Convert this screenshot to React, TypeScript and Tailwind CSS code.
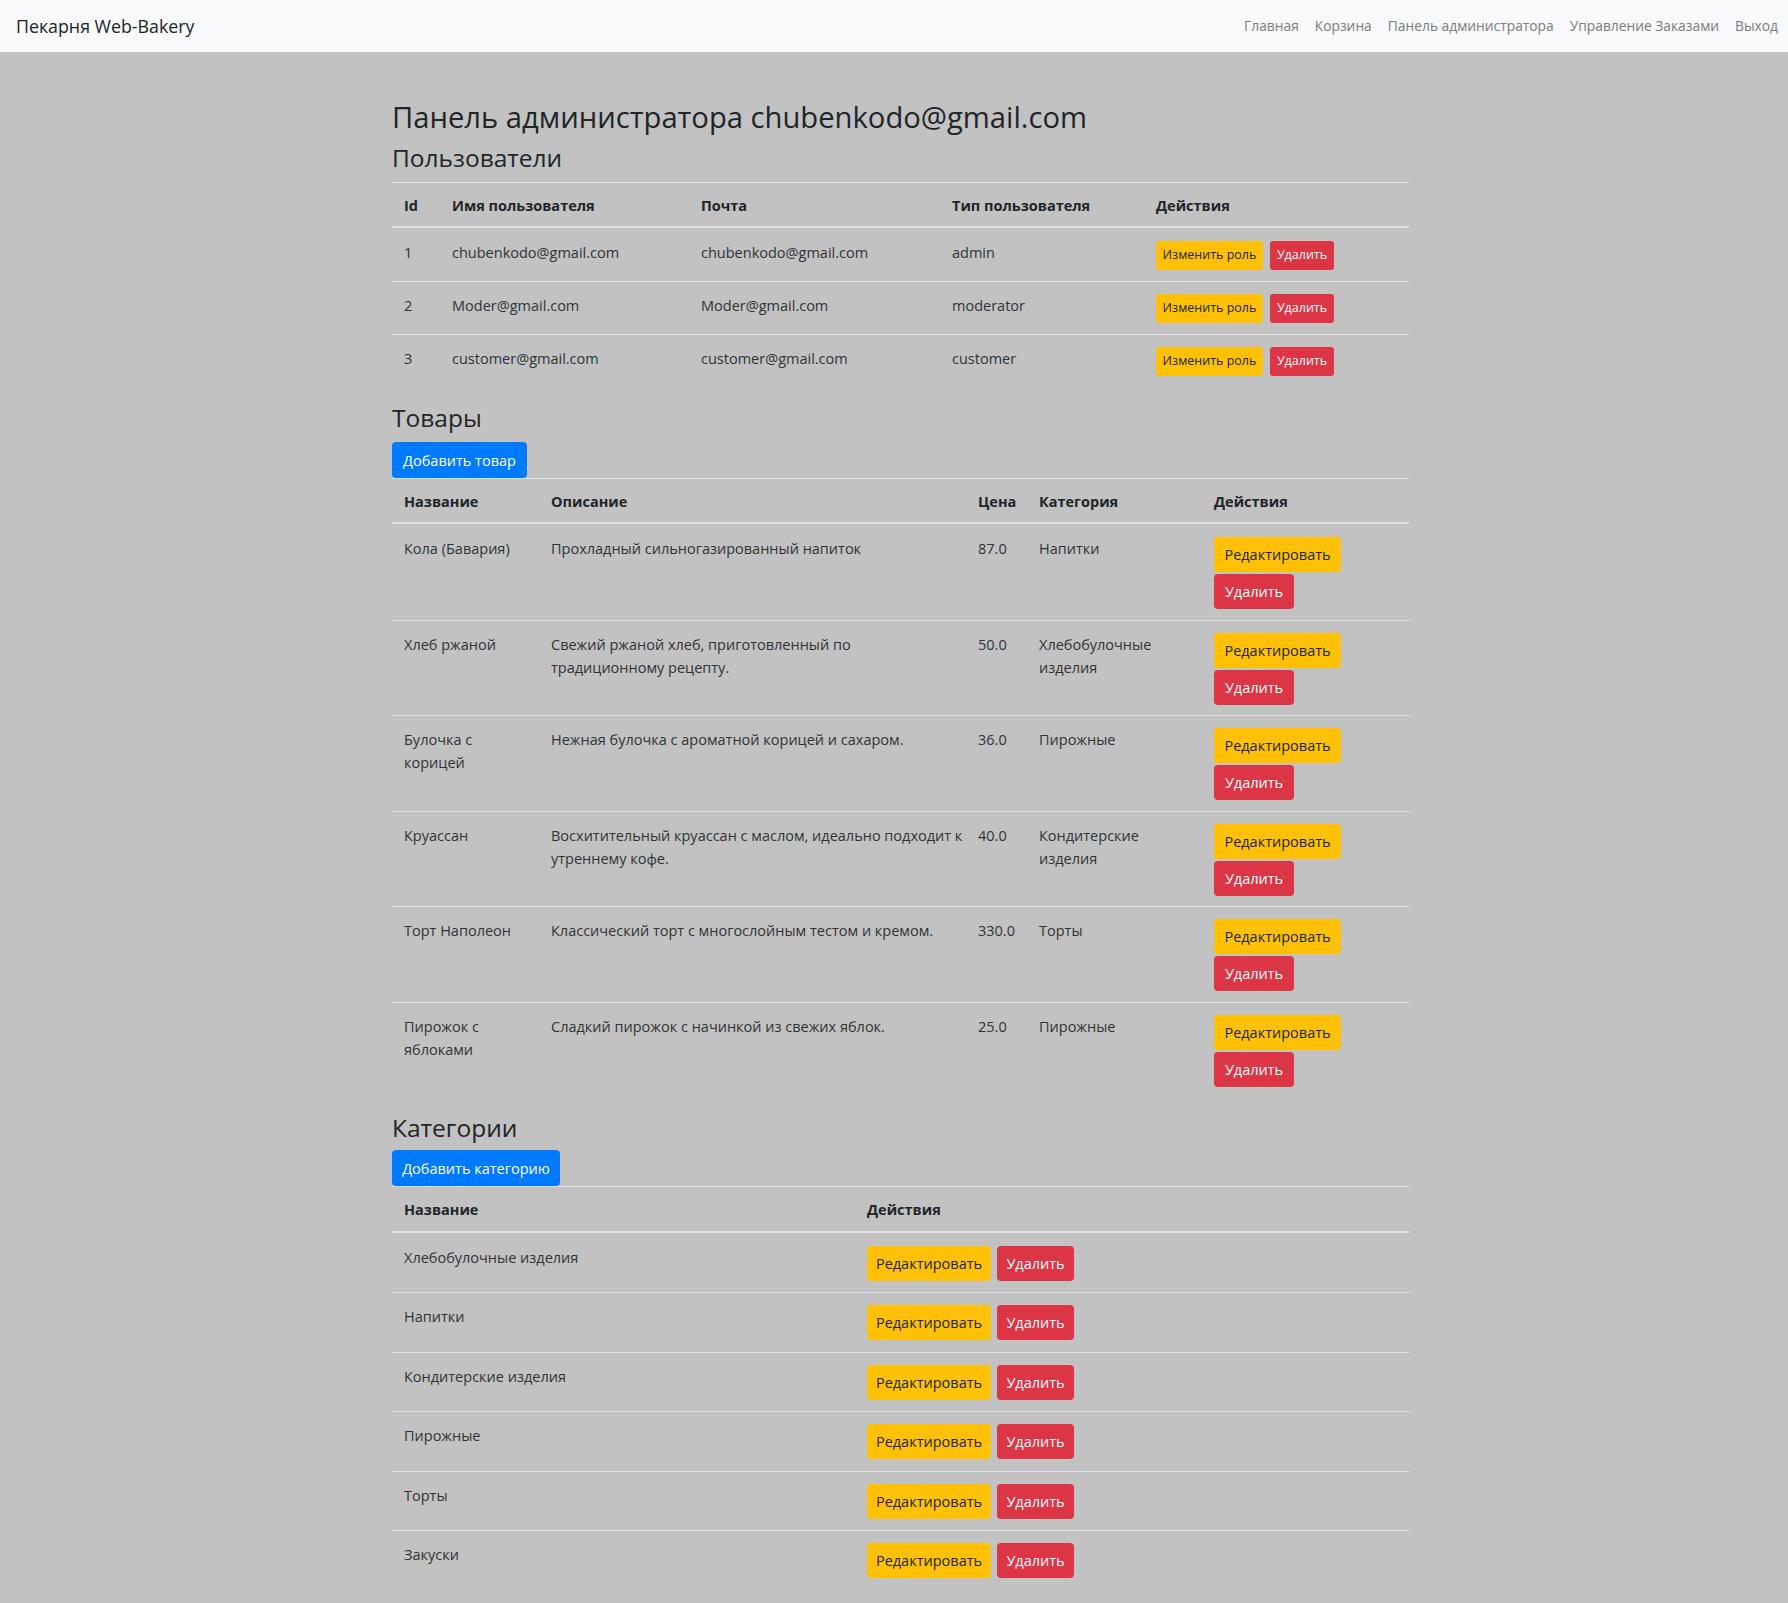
import React from 'react'

const users = [
  { id: 1, name: 'chubenkodo@gmail.com', email: 'chubenkodo@gmail.com', role: 'admin' },
  { id: 2, name: 'Moder@gmail.com', email: 'Moder@gmail.com', role: 'moderator' },
  { id: 3, name: 'customer@gmail.com', email: 'customer@gmail.com', role: 'customer' },
]

const products = [
  { name: ['Кола (Бавария)'], desc: ['Прохладный сильногазированный напиток'], price: '87.0', cat: ['Напитки'] },
  { name: ['Хлеб ржаной'], desc: ['Свежий ржаной хлеб, приготовленный по', 'традиционному рецепту.'], price: '50.0', cat: ['Хлебобулочные', 'изделия'] },
  { name: ['Булочка с', 'корицей'], desc: ['Нежная булочка с ароматной корицей и сахаром.'], price: '36.0', cat: ['Пирожные'] },
  { name: ['Круассан'], desc: ['Восхитительный круассан с маслом, идеально подходит к', 'утреннему кофе.'], price: '40.0', cat: ['Кондитерские', 'изделия'] },
  { name: ['Торт Наполеон'], desc: ['Классический торт с многослойным тестом и кремом.'], price: '330.0', cat: ['Торты'] },
  { name: ['Пирожок с', 'яблоками'], desc: ['Сладкий пирожок с начинкой из свежих яблок.'], price: '25.0', cat: ['Пирожные'] },
]

const categories = ['Хлебобулочные изделия', 'Напитки', 'Кондитерские изделия', 'Пирожные', 'Торты', 'Закуски']

const navLinks = ['Главная', 'Корзина', 'Панель администратора', 'Управление Заказами', 'Выход']

function Lines({ lines }: { lines: string[] }) {
  return (
    <>
      {lines.map((l, i) => (
        <div key={i} className="whitespace-nowrap">
          {l}
        </div>
      ))}
    </>
  )
}

export default function App() {
  return (
    <div
      className="min-h-[1603px] bg-[#c2c2c2] text-[#212529]"
      style={{ fontFamily: '"Open Sans", "Noto Sans", sans-serif' }}
    >
      <nav className="flex h-[52px] items-center justify-between bg-[#f8f9fa] pl-4 pr-[2px]">
        <span className="text-[17.8px] text-[#212529]">Пекарня Web-Bakery</span>
        <div className="flex items-center">
          {navLinks.map((l) => (
            <a key={l} className="px-2 text-[13.8px] text-[#7b7c7d]">
              {l}
            </a>
          ))}
        </div>
      </nav>

      <main className="ml-[392px] w-[1017px] pt-[48px] text-[14.5px] leading-[23px]">
        <h1 className="mb-2 text-[29.2px] font-medium leading-[35px]">Панель администратора chubenkodo@gmail.com</h1>
        <h2 className="mb-[9px] text-[24.5px] font-medium leading-[30px]">Пользователи</h2>

        <div className="mb-[16px]">
          <div className="grid h-[46px] grid-cols-[48px_249px_251px_204px_265px] border-t border-b-2 border-[#dee2e6] pt-[11px] font-bold">
            <div className="px-3">Id</div>
            <div className="px-3">Имя пользователя</div>
            <div className="px-3">Почта</div>
            <div className="px-3">Тип пользователя</div>
            <div className="px-3">Действия</div>
          </div>
          <div className="text-[#303336]">
            {users.map((u) => (
              <div
                key={u.id}
                className="grid h-[53px] grid-cols-[48px_249px_251px_204px_265px] border-t border-[#dee2e6] pt-[12px] first:border-t-0 first:pt-[13px]"
              >
                <div className="px-3">{u.id}</div>
                <div className="px-3">{u.name}</div>
                <div className="px-3">{u.email}</div>
                <div className="px-3">{u.role}</div>
                <div className="flex gap-[7px] px-3">
                  <button className="h-[29px] w-[107px] rounded-[3px] bg-[#ffc107] text-[12.5px] leading-none text-[#212529]">
                    Изменить роль
                  </button>
                  <button className="h-[29px] w-[64px] rounded-[3px] bg-[#dc3545] text-[12.5px] leading-none text-white">
                    Удалить
                  </button>
                </div>
              </div>
            ))}
          </div>
        </div>

        <h2 className="mb-[9px] text-[24.5px] font-medium leading-[30px]">Товары</h2>
        <button className="h-[36px] w-[135px] rounded-[4px] bg-[#007bff] text-[14.5px] text-white">Добавить товар</button>

        <div className="mb-4">
          <div className="grid h-[46px] grid-cols-[147px_427px_61px_175px_207px] border-t border-b-2 border-[#dee2e6] pt-[11px] font-bold">
            <div className="px-3">Название</div>
            <div className="px-3">Описание</div>
            <div className="px-3">Цена</div>
            <div className="px-3">Категория</div>
            <div className="px-3">Действия</div>
          </div>
          <div className="text-[#303336]">
            {products.map((p, i) => (
              <div
                key={i}
                className="grid h-[95.5px] grid-cols-[147px_427px_61px_175px_207px] border-t border-[#dee2e6] pt-[12px] first:border-t-0 first:pt-[13px]"
              >
                <div className="px-3">
                  <Lines lines={p.name} />
                </div>
                <div className="px-3">
                  <Lines lines={p.desc} />
                </div>
                <div className="px-3">{p.price}</div>
                <div className="px-3">
                  <Lines lines={p.cat} />
                </div>
                <div className="flex flex-col items-start gap-[2px] px-3">
                  <button className="h-[35px] w-[127px] rounded-[4px] bg-[#ffc107] text-[14.5px] text-[#212529]">
                    Редактировать
                  </button>
                  <button className="h-[35px] w-[80px] rounded-[4px] bg-[#dc3545] text-[14.5px] text-white">
                    Удалить
                  </button>
                </div>
              </div>
            ))}
          </div>
        </div>

        <h2 className="mb-[7px] text-[24.5px] font-medium leading-[30px]">Категории</h2>
        <button className="h-[36px] w-[168px] rounded-[4px] bg-[#007bff] text-[14.5px] text-white">
          Добавить категорию
        </button>

        <div>
          <div className="grid h-[47px] grid-cols-[463px_554px] border-t border-b-2 border-[#dee2e6] pt-[11px] font-bold">
            <div className="px-3">Название</div>
            <div className="px-3">Действия</div>
          </div>
          <div className="text-[#303336]">
            {categories.map((c) => (
              <div
                key={c}
                className="grid h-[59.4px] grid-cols-[463px_554px] border-t border-[#dee2e6] pt-[12px] first:border-t-0 first:pt-[13px]"
              >
                <div className="px-3">{c}</div>
                <div className="flex gap-[6px] px-3">
                  <button className="h-[35px] w-[124px] rounded-[4px] bg-[#ffc107] text-[14.5px] text-[#212529]">
                    Редактировать
                  </button>
                  <button className="h-[35px] w-[77px] rounded-[4px] bg-[#dc3545] text-[14.5px] text-white">
                    Удалить
                  </button>
                </div>
              </div>
            ))}
          </div>
        </div>
      </main>
    </div>
  )
}
